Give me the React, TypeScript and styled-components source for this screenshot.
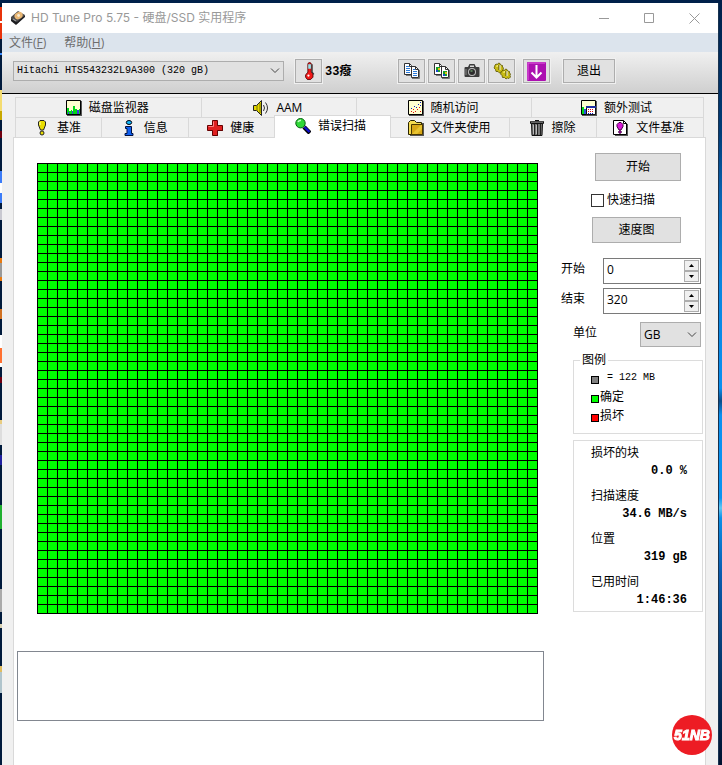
import React from "react";
import styled, { createGlobalStyle } from "styled-components";

const SANS = `"Open Sans", "Noto Sans CJK SC", sans-serif`;
const MONO = `"Liberation Mono", "Noto Sans CJK SC", monospace`;
const LINE = "#d9d9d9";
const FACE = "#e1e1e1";
const EDGE = "#adadad";

const GlobalStyle = createGlobalStyle`
  *, *::before, *::after { box-sizing: border-box; }
  body { margin: 0; background: #001a3c; }
  button, input, select, textarea { font: inherit; color: inherit; margin: 0; }
  svg { display: block; flex: none; }
`;

/* ---------- desktop and window ---------- */

const Desktop = styled.div`
  display: grid;
  grid-template-columns: 2px minmax(0, 1fr) 4px;
  min-height: 100vh;
  padding-top: 3px;
  background: #00204a;
  font-family: ${SANS};
  font-size: 12px;
  line-height: 16px;
  color: #000;
`;

const LeftEdge = styled.div`
  background: linear-gradient(
    #001a3c 4px, #e8320a 4px 18px, #fff 18px 20px, #e8320a 20px 36px, #001a3c 36px 50px,
    #3c8cff 50px 52px, #001a3c 52px 87px, #f4dc70 87px 108px, #c8a800 108px 117px, #001a3c 117px 128px,
    #700010 128px 135px, #001a3c 135px 168px, #3c7cf8 168px 180px, #fff 180px 190px, #3c7cf8 190px 200px,
    #001a3c 200px 206px, #c8c8d0 206px 217px, #001a3c 217px 255px, #e87a10 255px 260px, #999 260px 274px,
    #e87a10 274px 278px, #001a3c 278px 306px, #d07020 306px 316px, #001a3c 316px 332px, #fff 332px 345px,
    #ff7030 345px 360px, #fff 360px 364px, #001a3c 364px 374px, #700010 374px 380px, #001a3c 380px 417px,
    #e8cc80 417px 421px, #ddd 421px 442px, #001a3c 442px 452px, #2020a0 452px 462px, #001a3c 462px 502px,
    #20b030 502px 526px, #001a3c 526px 586px, #aaa 586px 609px, #001a3c 609px 621px, #d8d0b0 621px 625px,
    #001a3c 625px 663px, #e0bc60 663px 669px, #b0c4cc 669px 690px, #001a3c 690px
  );
`;

const RightEdge = styled.div`
  border-left: 1px solid #17324f;
  background: linear-gradient(
    #00204a, #003c78 130px, #0a62b0 190px, #0a86e0 280px, #0a90f0 385px, #0a4c88 398px, #0a90f0 412px,
    #0a94f0 495px, #60c8f4 505px, #0a90e8 515px, #0a5cb0 570px, #06407c 640px, #001230 760px
  );
`;

const Window = styled.main`
  display: flex;
  flex-direction: column;
  min-width: 0;
  background: #f0f0f0;
`;

const TitleBar = styled.header`
  display: flex;
  align-items: center;
  height: 30px;
  padding: 0 1px 0 8px;
  background: #fff;
  color: #999;
`;

const Title = styled.h1`
  flex: 1;
  margin: 0 0 0 5px;
  font-family: Inter, "Noto Sans CJK SC", sans-serif;
  font-size: 12px;
  font-weight: 400;
  white-space: nowrap;
`;

const CaptionButton = styled.button`
  display: grid;
  place-items: center;
  width: 45px;
  height: 28px;
  padding: 0;
  border: 0;
  background: none;
  color: #999;
`;

const MenuBar = styled.nav`
  display: flex;
  gap: 18px;
  height: 19px;
  padding-left: 7px;
  background: #dce4ed;
`;

const MenuItem = styled.button`
  padding: 0;
  border: 0;
  background: none;
  color: #6d6d6d;
  line-height: 19px;
`;

const Toolbar = styled.div`
  display: flex;
  align-items: center;
  height: 42px;
  padding: 0 11px 3px;
  border-bottom: 1px solid #000;
  background: linear-gradient(#f0f0f0, #cfcfcf);
`;

const ToolGroup = styled.div`
  display: flex;
  gap: 3px;
  margin-right: 8px;
`;

const ToolButton = styled.button<{ $text?: boolean }>`
  display: grid;
  place-items: center;
  flex: none;
  width: ${(p) => (p.$text ? 52 : 27)}px;
  height: 24px;
  margin-left: ${(p) => (p.$text ? 13 : 0)}px;
  padding: 0;
  border: 1px solid ${EDGE};
  outline: 1px solid #f0f0f0;
  background: ${FACE};
`;

const Temperature = styled.output`
  width: 76px;
  padding: 2px 0 0 3px;
  font-family: ${MONO};
  font-weight: 700;
`;

/* ---------- drop-downs ---------- */

const SelectBox = styled.div<{ $w: number; $h: number; $end?: number }>`
  position: relative;
  flex: none;
  width: ${(p) => p.$w}px;
  height: ${(p) => p.$h}px;
  margin-right: ${(p) => p.$end ?? 0}px;

  svg {
    position: absolute;
    right: 4px;
    top: 50%;
    margin-top: -3px;
    pointer-events: none;
  }
`;

const Select = styled.select<{ $mono?: boolean }>`
  appearance: none;
  width: 100%;
  height: 100%;
  padding: 0 3px;
  border: 1px solid ${EDGE};
  border-radius: 0;
  background: ${FACE};
  ${(p) => p.$mono && `font-family: ${MONO}; font-size: 10px;`}
`;

/* ---------- tabs ---------- */

const Tabs = styled.div`
  margin: 3px 14px 0 13px;
`;

const TabRow = styled.div`
  display: flex;
  height: 20px;
  border-left: 1px solid ${LINE};
`;

const Tab = styled.button<{ $grow: number; $active?: boolean }>`
  display: flex;
  align-items: center;
  justify-content: center;
  gap: 7px;
  flex: ${(p) => p.$grow} 1 0;
  min-width: 0;
  padding: 0 2px 0 0;
  border: solid ${LINE};
  border-width: 1px 1px 0 0;
  background: #f0f0f0;
  white-space: nowrap;
  ${(p) =>
    p.$active &&
    `
    margin: -2px 0 -1px -1px;
    padding: 0 4px 2px 0;
    border-left-width: 1px;
    background: #fff;
    z-index: 1;
  `}
`;

const Panel = styled.section`
  display: flex;
  flex: 1;
  margin: 0 12px 0 11px;
  padding-right: 2px;
  border: solid ${LINE};
  border-width: 1px 1px 0;
  background: #fff;
`;

const ScanArea = styled.div`
  flex: 1;
  min-width: 0;
  padding: 25px 17px 44px 3px;
`;

const BlockMap = styled.div`
  width: 501px;
  height: 451px;
  margin-left: 20px;
  background:
    linear-gradient(90deg, #000 1px, transparent 1px) 0 0 / 10px 9px,
    linear-gradient(#000 1px, #00ff00 1px) 0 0 / 10px 9px;
`;

const Log = styled.textarea`
  display: block;
  width: 100%;
  height: 70px;
  margin-top: 37px;
  border: 1px solid #828790;
  background: #fff;
  resize: none;
`;

/* ---------- side column ---------- */

const Side = styled.aside`
  display: flex;
  flex-direction: column;
  flex: none;
  width: 142px;
  padding-top: 15px;
`;

const PushButton = styled.button<{ $wide?: boolean }>`
  align-self: flex-end;
  width: ${(p) => (p.$wide ? 89 : 86)}px;
  height: ${(p) => (p.$wide ? 26 : 28)}px;
  margin-right: 22px;
  padding: 0;
  border: 1px solid ${EDGE};
  background: ${FACE};
`;

const CheckLabel = styled.label`
  display: flex;
  align-items: center;
  gap: 3px;
  margin: 11px 0 9px 30px;
`;

const Check = styled.input`
  appearance: none;
  width: 13px;
  height: 13px;
  border: 1px solid #333;
  background: #fff;

  &:checked { background: #333; }
`;

const Field = styled.div<{ $indent?: number; $top: number }>`
  display: flex;
  justify-content: space-between;
  margin: ${(p) => p.$top}px 2px 0 ${(p) => p.$indent ?? 0}px;

  label { padding-top: 3px; }
`;

const SpinBox = styled.div`
  display: flex;
  width: 98px;
  height: 26px;
  padding: 1px;
  border: 1px solid #7a7a7a;
`;

const SpinInput = styled.input`
  flex: 1;
  min-width: 0;
  padding: 0 2px 2px;
  border: 0;
  outline: 0;
`;

const SpinButtons = styled.div`
  display: grid;
  grid-template-rows: 1fr 1fr;
  width: 15px;
`;

const SpinButton = styled.button`
  display: grid;
  place-items: center;
  padding: 0;
  border: 1px solid ${EDGE};
  background: #f0f0f0;
`;

const Legend = styled.fieldset`
  min-width: 0;
  height: 82px;
  margin: 5px 0 0 12px;
  padding: 0 0 0 17px;
  border: 1px solid #dcdcdc;

  legend {
    margin-left: -11px;
    padding: 0 2px;
  }
`;

const LegendRow = styled.div<{ $mono?: boolean }>`
  display: flex;
  align-items: flex-end;
  height: 19px;
  gap: ${(p) => (p.$mono ? 8 : 1)}px;

  span {
    align-self: center;
    ${(p) => p.$mono && `font-family: ${MONO}; font-size: 10px;`}
  }
`;

const Swatch = styled.i<{ $color: string }>`
  width: 8px;
  height: 8px;
  margin-bottom: 3px;
  border: 1px solid #000;
  background: ${(p) => p.$color};
`;

const Stats = styled.dl`
  margin: 6px 0 0 12px;
  padding: 4px 15px 3px 17px;
  border: 1px solid #dcdcdc;

  dd {
    margin: 2px 0 9px;
    font-family: ${MONO};
    font-weight: 700;
    text-align: right;
  }
  dd:last-child { margin-bottom: 0; }
`;

const Badge = styled.a`
  position: fixed;
  right: 10px;
  bottom: 10px;
  z-index: 2;
`;

/* ---------- icons ---------- */

const Icon = ({ children, size = 16 }: { children: React.ReactNode; size?: number }) => (
  <svg width={size} height={size} viewBox="0 0 16 16" fill="none" aria-hidden="true">
    {children}
  </svg>
);

const DiskIcon = () => (
  <Icon>
    <path d="M1 7 8 1l7 4-7 8-2 1-5-4z" fill="#4a4a4c" />
    <path d="M1 9v2l5 4 9-8V5l-8 7z" fill="#1d1d20" />
    <ellipse cx="8.600" cy="5.600" rx="4.300" ry="3.300" transform="rotate(-30 8.600 5.600)" fill="#e9b774" />
    <circle cx="8.600" cy="5.500" r="1.400" fill="#f9ead0" />
    <path d="m3 9 3 2" stroke="#999" strokeWidth="1.200" />
  </Icon>
);

const ThermometerIcon = () => (
  <Icon size={18}>
    <path d="M7 2q0-1.500 1.500-1.500T10 2v7l1.500 1.500v3L9.500 15.500h-3L5 13.500v-2L7 9z" fill="#f21818" stroke="#500" strokeWidth=".8" />
    <path d="M7.300 2h2.400v4H7.300z" fill="#8fe6ee" />
    <path d="M10.800 2v7l1.600 2" stroke="#333" />
    <circle cx="7.500" cy="12" r="1" fill="#fff" />
  </Icon>
);

const PagesIcon = ({ picture }: { picture?: boolean }) => (
  <Icon>
    <path d="M8 15.500h7.500V7M2 12.500h5" stroke="#777" />
    <path d="M.5.500h5l2 2v9h-7zM7.500 3.500h4l3 3v8h-7z" fill="#fff" stroke="#333" />
    <path d="M5.500.5v3h2M11.500 3.500v3h3" stroke="#333" />
    {picture ? (
      <>
        <path d="M2 4h4v5H2zM9 8h4v5H9z" fill="#18a028" />
        <path d="M4 5h2v2H4zM11 9h2v2h-2z" fill="#e8c018" />
        <path d="M2 7h2v2H2zM9 11h2v2H9z" fill="#1848d0" />
      </>
    ) : (
      <path d="M2 3.500h3M2 5.500h4M2 7.500h4M2 9.500h4M9 6.500h2M9 8.500h4M9 10.500h4M9 12.500h4" stroke="#2a7ad8" />
    )}
  </Icon>
);

const CameraIcon = () => (
  <Icon>
    <path d="M.5 5q0-1 1-1H4l1.500-3h5L12 4h2.500q1 0 1 1v8q0 1-1 1h-13q-1 0-1-1z" fill="#3c3c3c" />
    <path d="M6 2.500h4v1.500H6z" fill="#ddd" />
    <circle cx="8" cy="9" r="4" fill="#bbb" />
    <circle cx="8" cy="9" r="3" fill="#2c2c2c" />
    <path d="M2 6v6" stroke="#888" />
    <path d="M6.500 8h2" stroke="#8c8" />
  </Icon>
);

const GearsIcon = () => (
  <svg width="18" height="18" viewBox="0 0 18 18" fill="none" aria-hidden="true">
    <g fill="#c8bc14" stroke="#5c5600" strokeWidth=".8">
      <path d="m2 3 1-1 1.500.5L5.500 1l1.500.5.5 1.500 2 .5v1.500l1 1-.5 1.500 1 1.500-1.500 1.500-1.500-.5-1.500 1-1.500-1.500-2 0-.5-2-1.500-1.500L1.500 5z" />
      <path d="m9 9 1-1 1.500.5L12.500 7l1.500.5.5 1.500 2 .5V11l1 1-.5 1.500.5 1.500-1.500 1.500-1.500-.5-1.500 1-1.500-1.500-2 0-.5-2-1.500-1.500.500-1.500z" />
    </g>
    <path d="M3.500 4.500 5 3.500M10.500 10.500 12 9.500" stroke="#fff68c" strokeWidth="1.500" />
    <path d="M6 3v5M13 9v5" stroke="#4c4800" />
    <path d="M7 3v5M14 9v5" stroke="#eee" />
  </svg>
);

const SaveIcon = () => (
  <svg width="19" height="19" viewBox="0 0 19 19" aria-hidden="true">
    <rect width="19" height="19" rx="1" fill="#ac10b0" />
    <path d="M1 18V1h17" stroke="#e060e0" fill="none" />
    <path d="M9.500 3v12M4.500 10.500l5 5 5-5" stroke="#fff" strokeWidth="2" fill="none" />
  </svg>
);

const Framed = ({ children }: { children: React.ReactNode }) => (
  <Icon>
    <path d="M1 1h15v15H1z" fill="#555" />
    <path d="M.5.5h14v14H.5z" fill="#ffffd0" stroke="#000" />
    {children}
  </Icon>
);

const MonitorIcon = () => (
  <Framed>
    <path d="M1 8h2v6H1zM3 11h2v3H3zM5 10h1v4H5zM7 6h2v8H7zM9 9h2v5H9zM13 9h1v5h-1z" fill="#00d818" />
    <path d="M6 11h1v3H6zM2 12h1v2H2zM11 10h2v4h-2z" fill="#4038e0" />
  </Framed>
);

const SpeakerIcon = () => (
  <Icon>
    <path d="M.5 5.500h3l5-5v15l-5-5h-3z" fill="#e4d800" stroke="#222" />
    <path d="M4 5v6" stroke="#777000" />
    <path d="M7 3v10" stroke="#777000" />
    <path d="M10.500 5q2 3 0 6M12.500 2.500q4 5.500 0 11" stroke="#333" />
  </Icon>
);

const ScatterIcon = () => (
  <Framed>
    <path d="M3 11h1v1H3zM5 9h1v1H5zM7 11h1v1H7zM9 9h1v1H9zM11 7h1v1h-1zM12 11h1v1h-1zM5 12h1v1H5z" fill="#e01010" />
    <path d="M3 8h1v1H3zM6 6h1v1H6zM8 7h1v1H8zM10 4h1v1h-1zM12 5h1v1h-1zM12 2h1v1h-1z" fill="#1020c0" />
  </Framed>
);

const ExtraIcon = () => (
  <Framed>
    <path d="M1 7h2v7H1z" fill="#00d818" />
    <path d="M3 9h2v5H3z" fill="#3050e0" />
    <path d="M5.500 6.500h9v8h-9z" fill="#fff" stroke="#111" />
    <path d="M5 6h10v2H5z" fill="#2030a0" />
    <path d="M7 9.500h6M7 11.500h6" stroke="#e01010" strokeDasharray="1 1" />
    <path d="M7 13.500h6" stroke="#1020d0" strokeDasharray="1 1" />
  </Framed>
);

const MarkIcon = () => (
  <Icon>
    <path d="M6 .5h4l1.500 1.500v3l-2 5h-3l-2-5V2z" fill="#e8dc00" stroke="#222" />
    <circle cx="8" cy="13" r="2" fill="#e8dc00" stroke="#222" />
    <path d="M6 2v3" stroke="#ffffb0" />
  </Icon>
);

const InfoIcon = () => (
  <Icon>
    <ellipse cx="8" cy="2.500" rx="2.700" ry="2" fill="#10b8f8" stroke="#001" />
    <path d="M4.500 6.500H10.500V13.500h1.500v2h-8v-2h2V8.500H4.500z" fill="#1060f0" stroke="#001040" />
  </Icon>
);

const HealthIcon = () => (
  <Icon>
    <path d="M6 1h5v5h5v5h-5v5H6v-5H1V6h5z" fill="#555" />
    <path d="M5.500.5h5v5h5v5h-5v5h-5v-5h-5v-5h5z" fill="#e02020" stroke="#600" />
    <path d="M6.500 1.500v5h-5" stroke="#ff8080" />
  </Icon>
);

const MagnifierIcon = () => (
  <Icon>
    <path d="m9 9 6 6" stroke="#000" strokeWidth="4.400" />
    <path d="m9.500 9 5 5" stroke="#1010d0" strokeWidth="2.400" />
    <circle cx="5.500" cy="5.200" r="4.700" fill="#30d838" stroke="#066010" />
    <path d="M3 4q1-2 3-1.500" stroke="#c8ffc8" strokeWidth="1.500" />
  </Icon>
);

const FolderIcon = () => (
  <Icon>
    <path d="M2 3h14v13H2z" fill="#555" />
    <path d="M.5 14.500V2.500l2-2h4l2 2h5v12z" fill="#f4dc50" stroke="#2a2400" />
    <path d="M3.500 4.500h11v10h-11z" fill="#d8a818" stroke="#4a3800" />
    <path d="m4 14 9-9h1v4l-5 5z" fill="#e8c430" />
  </Icon>
);

const TrashIcon = () => (
  <Icon>
    <path d="M2.500 3.500h11l-.5 12H3z" fill="#777" stroke="#111" />
    <path d="M1 2.500h14" stroke="#111" strokeWidth="2.500" />
    <path d="M6 .5h4" stroke="#111" />
    <path d="M5.500 4v11M8.500 4v11M11.500 4v11" stroke="#222" />
    <path d="M4.500 5v9M7.500 5v9" stroke="#bbb" />
    <path d="M2 2.500h12" stroke="#666" />
  </Icon>
);

const FileMarkIcon = () => (
  <Icon>
    <path d="M2 4h13v12H2z" fill="#555" />
    <path d="M.5.500h10l3 3v11H.5z" fill="#fff" stroke="#000" />
    <path d="M10.500.5v3h3" stroke="#000" />
    <path d="M6 2.500h2l2 2v2L8 10H6L4 6.500v-2z" fill="#d818d8" stroke="#400040" />
    <circle cx="7" cy="12" r="1.300" fill="#d818d8" stroke="#400040" />
  </Icon>
);

const Chevron = () => (
  <svg width="10" height="6" viewBox="0 0 10 6" fill="none" stroke="#444" aria-hidden="true">
    <path d="m1 .5 4 4 4-4" />
  </svg>
);

const Arrow = ({ down }: { down?: boolean }) => (
  <svg width="5" height="3" viewBox="0 0 5 3" aria-hidden="true">
    <path d={down ? "M0 0h5L2.500 3z" : "M0 3h5L2.500 0z"} fill="#000" />
  </svg>
);

/* ---------- data ---------- */

const tabRows = [
  [
    { label: "磁盘监视器", grow: 186, icon: <MonitorIcon /> },
    { label: "AAM", grow: 155, icon: <SpeakerIcon /> },
    { label: "随机访问", grow: 175, icon: <ScatterIcon /> },
    { label: "额外测试", grow: 172, icon: <ExtraIcon /> },
  ],
  [
    { label: "基准", grow: 86, icon: <MarkIcon /> },
    { label: "信息", grow: 87, icon: <InfoIcon /> },
    { label: "健康", grow: 86, icon: <HealthIcon /> },
    { label: "错误扫描", grow: 114, icon: <MagnifierIcon />, active: true },
    { label: "文件夹使用", grow: 121, icon: <FolderIcon /> },
    { label: "擦除", grow: 86, icon: <TrashIcon /> },
    { label: "文件基准", grow: 108, icon: <FileMarkIcon /> },
  ],
];

const stats = [
  ["损坏的块", "0.0 %"],
  ["扫描速度", "34.6 MB/s"],
  ["位置", "319 gB"],
  ["已用时间", "1:46:36"],
];

const Spinner = ({ id, label, value, top }: { id: string; label: string; value: string; top: number }) => (
  <Field $top={top}>
    <label htmlFor={id}>{label}</label>
    <SpinBox>
      <SpinInput id={id} defaultValue={value} />
      <SpinButtons>
        <SpinButton aria-label={`${label} +`}><Arrow /></SpinButton>
        <SpinButton aria-label={`${label} -`}><Arrow down /></SpinButton>
      </SpinButtons>
    </SpinBox>
  </Field>
);

export default function App() {
  return (
    <>
      <GlobalStyle />
      <Desktop>
        <LeftEdge />
        <Window>
          <TitleBar>
            <DiskIcon />
            <Title>HD Tune Pro 5.75 - 硬盘/SSD 实用程序</Title>
            <CaptionButton aria-label="最小化">
              <svg width="11" height="11" stroke="currentColor"><path d="M0 5.500h10" /></svg>
            </CaptionButton>
            <CaptionButton aria-label="最大化">
              <svg width="11" height="11" stroke="currentColor" fill="none"><path d="M.5.5h9v9h-9z" /></svg>
            </CaptionButton>
            <CaptionButton aria-label="关闭">
              <svg width="11" height="11" stroke="currentColor"><path d="m.5.5 10 10M10.500.5l-10 10" /></svg>
            </CaptionButton>
          </TitleBar>

          <MenuBar>
            <MenuItem>文件(<u>F</u>)</MenuItem>
            <MenuItem>帮助(<u>H</u>)</MenuItem>
          </MenuBar>

          <Toolbar>
            <SelectBox $w={271} $h={20} $end={11}>
              <Select $mono aria-label="硬盘">
                <option>Hitachi HTS543232L9A300 (320 gB)</option>
              </Select>
              <Chevron />
            </SelectBox>
            <ToolButton aria-label="温度"><ThermometerIcon /></ToolButton>
            <Temperature>33癈</Temperature>
            <ToolGroup>
              <ToolButton aria-label="复制文本"><PagesIcon /></ToolButton>
              <ToolButton aria-label="复制图像"><PagesIcon picture /></ToolButton>
              <ToolButton aria-label="截图"><CameraIcon /></ToolButton>
              <ToolButton aria-label="选项"><GearsIcon /></ToolButton>
            </ToolGroup>
            <ToolButton aria-label="保存"><SaveIcon /></ToolButton>
            <ToolButton $text>退出</ToolButton>
          </Toolbar>

          <Tabs role="tablist">
            {tabRows.map((row, i) => (
              <TabRow key={i}>
                {row.map((t) => {
                  const active = "active" in t;
                  return (
                    <Tab key={t.label} role="tab" aria-selected={active} $grow={t.grow} $active={active}>
                      {t.icon}
                      {t.label}
                    </Tab>
                  );
                })}
              </TabRow>
            ))}
          </Tabs>

          <Panel>
            <ScanArea>
              <BlockMap role="img" aria-label="错误扫描" />
              <Log aria-label="错误扫描" readOnly />
            </ScanArea>

            <Side>
              <PushButton>开始</PushButton>
              <CheckLabel>
                <Check type="checkbox" />
                快速扫描
              </CheckLabel>
              <PushButton $wide>速度图</PushButton>
              <Spinner id="from" label="开始" value="0" top={15} />
              <Spinner id="to" label="结束" value="320" top={4} />
              <Field $top={8} $indent={12}>
                <label htmlFor="unit">单位</label>
                <SelectBox $w={61} $h={25}>
                  <Select id="unit">
                    <option>GB</option>
                  </Select>
                  <Chevron />
                </SelectBox>
              </Field>

              <Legend>
                <legend>图例</legend>
                <LegendRow $mono><Swatch $color="#808080" /><span>= 122 MB</span></LegendRow>
                <LegendRow><Swatch $color="#00ff00" /><span>确定</span></LegendRow>
                <LegendRow><Swatch $color="#ff0000" /><span>损坏</span></LegendRow>
              </Legend>

              <Stats>
                {stats.map(([name, value]) => (
                  <React.Fragment key={name}>
                    <dt>{name}</dt>
                    <dd>{value}</dd>
                  </React.Fragment>
                ))}
              </Stats>
            </Side>
          </Panel>
        </Window>
        <RightEdge />
      </Desktop>

      <Badge href="#" aria-label="51NB">
        <svg width="40" height="40" viewBox="0 0 40 40">
          <circle cx="20" cy="20" r="20" fill="#ed1c24" />
          <text
            x="20"
            y="25"
            textAnchor="middle"
            fill="#fff"
            stroke="#fff"
            strokeWidth="1"
            fontFamily="'Liberation Sans', sans-serif"
            fontSize="14"
            fontWeight="700"
            fontStyle="italic"
          >
            51NB
          </text>
        </svg>
      </Badge>
    </>
  );
}
